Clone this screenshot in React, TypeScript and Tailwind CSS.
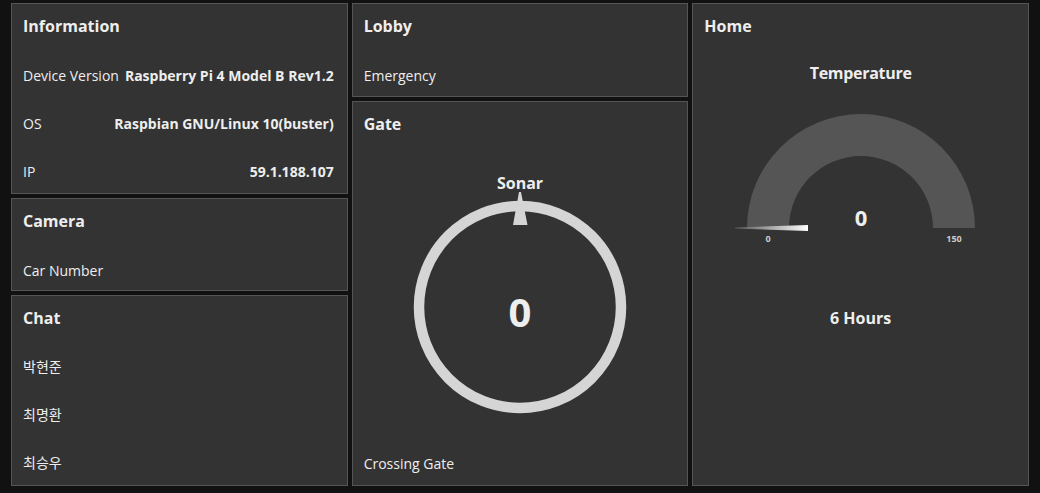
import React from 'react';

const font = "font-['Open_Sans','Noto_Sans_CJK_KR',sans-serif]";

function Panel({ title, className, children }: { title: string; className?: string; children?: React.ReactNode }) {
  return (
    <div className={`border border-[#555] bg-[#333] text-[#eee] overflow-hidden flex flex-col ${className ?? ''}`}>
      <div className="h-[48px] shrink-0 pb-1 pl-[11px] flex items-center text-[16px] font-bold">{title}</div>
      {children}
    </div>
  );
}

function Row({ label, value, ko }: { label: string; value?: string; ko?: boolean }) {
  return (
    <div className="h-[48px] shrink-0 pb-[2px] pl-[11px] pr-[13px] flex items-center justify-between text-[14px]">
      <span className={ko ? "font-['Noto_Sans_CJK_KR',sans-serif]" : ''}>{label}</span>
      {value && <span className="font-bold">{value}</span>}
    </div>
  );
}

function SonarGauge() {
  return (
    <svg width="230" height="230" viewBox="0 0 230 230" className="mx-auto -mt-[3px] shrink-0">
      <circle cx="115" cy="115" r="101" fill="none" stroke="#d4d5d4" strokeWidth="10.5" />
      <polygon points="114,0 116,0 122.5,33 108,33" fill="#d4d5d4" />
      <text x="115" y="119" textAnchor="middle" dominantBaseline="central" fill="#eee" fontSize="40" fontWeight="700" fontFamily="Open Sans, sans-serif">0</text>
    </svg>
  );
}

function TempGauge() {
  return (
    <svg width="260" height="135" viewBox="0 0 260 135" className="mx-auto mt-[25px] shrink-0">
      <defs>
        <linearGradient id="needle" x1="0" x2="1" y1="0" y2="0">
          <stop offset="0" stopColor="#555" />
          <stop offset="1" stopColor="#fff" />
        </linearGradient>
      </defs>
      <path d="M 16 118 A 114 114 0 0 1 244 118 L 202 118 A 72 72 0 0 0 58 118 Z" fill="#555" />
      <polygon points="4,117.5 77,115 77,121 4,118.5" fill="url(#needle)" />
      <text x="130" y="107" textAnchor="middle" dominantBaseline="central" fill="#eee" fontSize="22" fontWeight="700" fontFamily="Open Sans, sans-serif">0</text>
      <text x="37" y="128" textAnchor="middle" dominantBaseline="central" fill="#ccc" fontSize="9" fontWeight="700" fontFamily="Open Sans, sans-serif">0</text>
      <text x="223" y="128" textAnchor="middle" dominantBaseline="central" fill="#ccc" fontSize="9" fontWeight="700" fontFamily="Open Sans, sans-serif">150</text>
    </svg>
  );
}

export default function App() {
  return (
    <div className={`w-[1040px] h-[493px] bg-[#111] px-[11px] pt-[3px] grid grid-cols-3 gap-1 ${font}`}>
      {/* Left column */}
      <div className="flex flex-col gap-1">
        <Panel title="Information" className="h-[191px]">
          <Row label="Device Version" value="Raspberry Pi 4 Model B Rev1.2" />
          <Row label="OS" value="Raspbian GNU/Linux 10(buster)" />
          <Row label="IP" value="59.1.188.107" />
        </Panel>
        <Panel title="Camera" className="h-[93px]">
          <Row label="Car Number" />
        </Panel>
        <Panel title="Chat" className="h-[191px]">
          <div className="-mt-px flex flex-col">
            <Row label="박현준" ko />
            <Row label="최명환" ko />
            <Row label="최승우" ko />
          </div>
        </Panel>
      </div>

      {/* Middle column */}
      <div className="flex flex-col gap-1">
        <Panel title="Lobby" className="h-[94px]">
          <Row label="Emergency" />
        </Panel>
        <Panel title="Gate" className="h-[385px]">
          <div className="h-[24px] mt-[21px] shrink-0 flex items-center justify-center text-[16px] font-bold">Sonar</div>
          <SonarGauge />
          <div className="h-[40px] mt-[21px] shrink-0 pl-[11px] flex items-center text-[14px]">Crossing Gate</div>
        </Panel>
      </div>

      {/* Right column */}
      <div className="flex flex-col">
        <Panel title="Home" className="h-[483px]">
          <div className="h-[24px] mt-[9px] shrink-0 flex items-center justify-center text-[16px] font-bold tracking-[-0.3px]">Temperature</div>
          <TempGauge />
          <div className="h-[24px] mt-[61px] shrink-0 flex items-center justify-center text-[16px] font-bold">6 Hours</div>
        </Panel>
      </div>
    </div>
  );
}
